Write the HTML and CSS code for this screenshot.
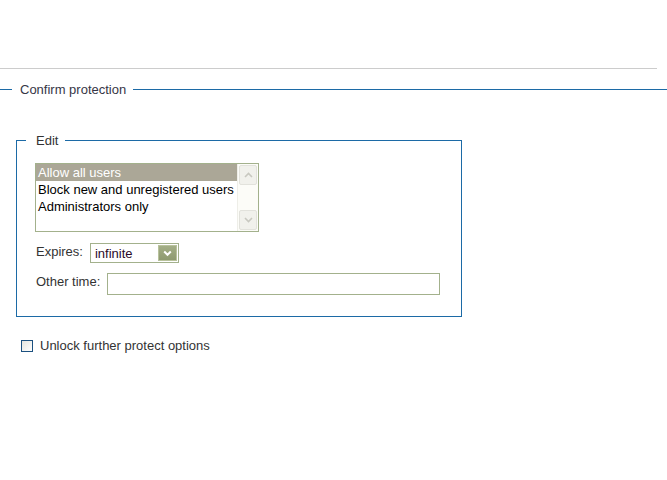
FILE: index.html
```html
<!DOCTYPE html>
<html>
<head>
<meta charset="utf-8">
<link rel="stylesheet" href="styles.css">
</head>
<body>
<div class="topbar"></div>
<fieldset class="outer">
  <legend class="outer-legend">Confirm protection</legend>
  <fieldset class="inner">
    <legend class="inner-legend">Edit</legend>
    <div class="listbox">
      <div class="options">
        <div class="option selected">Allow all users</div>
        <div class="option">Block new and unregistered users</div>
        <div class="option">Administrators only</div>
      </div>
      <div class="scrollbar">
        <div class="sbtn">
          <svg width="9" height="6" viewBox="0 0 9 6"><path d="M1 5 L4.5 1.5 L8 5" fill="none" stroke="#c8c8c0" stroke-width="1.6"/></svg>
        </div>
        <div class="strack"></div>
        <div class="sbtn">
          <svg width="9" height="6" viewBox="0 0 9 6"><path d="M1 1 L4.5 4.5 L8 1" fill="none" stroke="#c8c8c0" stroke-width="1.6"/></svg>
        </div>
      </div>
    </div>
    <div class="row row-expires">
      <span class="label">Expires:</span>
      <div class="select">
        <span class="select-value">infinite</span>
        <span class="select-btn">
          <svg width="9" height="7" viewBox="0 0 9 7"><path d="M1.2 1.5 L4.5 4.8 L7.8 1.5" fill="none" stroke="#ffffff" stroke-width="2"/></svg>
        </span>
      </div>
    </div>
    <div class="row row-other">
      <span class="label">Other time:</span>
      <div class="textinput"></div>
    </div>
  </fieldset>
  <div class="check-row">
    <span class="checkbox"></span>
    <span class="check-label">Unlock further protect options</span>
  </div>
</fieldset>
</body>
</html>
```

FILE: styles.css
```css
html, body {
  margin: 0;
  padding: 0;
  background: #ffffff;
}
body {
  font-family: "Liberation Sans", Arial, sans-serif;
  font-size: 13px;
  color: #333333;
}
.topbar {
  height: 68px;
  margin-right: 10px;
  border-bottom: 1px solid #cccccc;
}
.outer {
  margin: 13px 0 0 0;
  padding: 0;
  border: 0;
  border-top: 1px solid #1c6aa6;
  min-width: 0;
}
.outer-legend {
  margin-left: 12px;
  padding: 0 7px 0 8px;
  line-height: 15px;
  color: #363646;
}
.inner {
  margin: 36px 0 0 16px;
  width: 446px;
  box-sizing: border-box;
  border: 1px solid #1c6aa6;
  padding: 0 0 21px 18px;
  min-width: 0;
}
.inner-legend {
  margin-left: -9px;
  padding: 0 7px 0 10px;
  line-height: 15px;
  color: #333333;
}
.listbox {
  margin-top: 15px;
  width: 224px;
  height: 69px;
  box-sizing: border-box;
  border: 1px solid #a3b18c;
  display: flex;
  background: #ffffff;
}
.options {
  flex: 1;
}
.option {
  height: 17px;
  line-height: 17px;
  padding-left: 2px;
  color: #000000;
  white-space: nowrap;
}
.option.selected {
  background: #aba797;
  color: #ffffff;
}
.scrollbar {
  width: 21px;
  display: flex;
  flex-direction: column;
  background: #fcfcf8;
  border-left: 1px solid #eeeee8;
  padding: 1px 1px 1px 1px;
  box-sizing: border-box;
}
.sbtn {
  height: 18px;
  background: #f1f1ec;
  border: 1px solid #e2e2dc;
  border-radius: 2px;
  display: flex;
  align-items: center;
  justify-content: center;
}
.strack {
  flex: 1;
}
.row {
  display: flex;
  align-items: flex-start;
}
.label {
  color: #333333;
  line-height: 15px;
  margin-left: 1px;
}
.row-expires {
  margin-top: 11px;
}
.row-expires .label {
  margin-top: 1px;
  margin-right: 7px;
}
.select {
  width: 89px;
  height: 20px;
  box-sizing: border-box;
  border: 1px solid #a3b18c;
  display: flex;
  align-items: center;
  justify-content: space-between;
  padding: 0 1px 0 4px;
}
.select-value {
  color: #2a0a2a;
  line-height: 16px;
  margin-top: 1px;
}
.select-btn {
  width: 19px;
  height: 16px;
  background: linear-gradient(#a3ae86, #8e9a70);
  border: 1px solid #b8c29c;
  box-sizing: border-box;
  display: flex;
  align-items: center;
  justify-content: center;
}
.row-other {
  margin-top: 10px;
}
.row-other .label {
  margin-top: 1px;
  margin-right: 7px;
}
.textinput {
  width: 333px;
  height: 22px;
  box-sizing: border-box;
  border: 1px solid #a3b18c;
  background: #ffffff;
}
.check-row {
  margin: 21px 0 0 21px;
  display: flex;
  align-items: center;
}
.checkbox {
  width: 12px;
  height: 12px;
  box-sizing: border-box;
  border: 1px solid #1c5180;
  background: linear-gradient(135deg, #e4e4de, #ffffff);
  margin-right: 7px;
}
.check-label {
  color: #333333;
  line-height: 15px;
}
```
